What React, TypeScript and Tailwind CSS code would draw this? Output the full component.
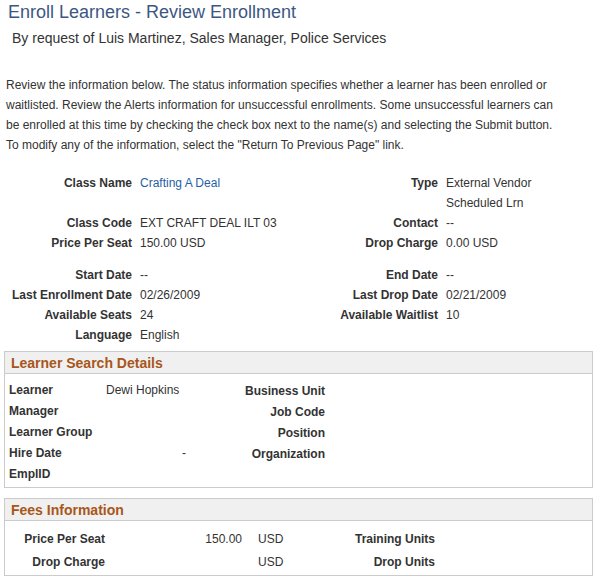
import React from 'react';

const font = { fontFamily: '"Liberation Sans", Arial, sans-serif' };

function Row({ l1, v1, l2, v2, h = 'h-5' }: { l1: string; v1: React.ReactNode; l2?: string; v2?: React.ReactNode; h?: string }) {
  return (
    <>
      <div className={`${h} text-right font-bold whitespace-nowrap`}>{l1}</div>
      <div className={h}>{v1}</div>
      <div className={`${h} text-right font-bold whitespace-nowrap`}>{l2}</div>
      <div className={h}>{v2}</div>
    </>
  );
}

function Box({ title, children }: { title: string; children: React.ReactNode }) {
  return (
    <div className="mx-1 border border-[#cbcbcb]">
      <div className="h-[22px] bg-[#f0f0f0] border-b border-[#cbcbcb] px-[6px] text-[14px] font-bold leading-[22px] text-[#a8561a]">{title}</div>
      {children}
    </div>
  );
}

export default function App() {
  return (
    <div style={font} className="w-[597px] h-[586px] bg-white text-[12px] text-[#333] overflow-hidden">
      <h1 className="pl-[8px] pt-0 text-[18px] leading-[24px] text-[#3b5784]">Enroll Learners - Review Enrollment</h1>
      <div className="pl-[12px] pt-[5px] text-[14px] leading-[18px] text-[#333]">By request of Luis Martinez, Sales Manager, Police Services</div>

      <p className="pl-[6px] w-[560px] pt-[28px] leading-[20px]">
        Review the information below. The status information specifies whether a learner has been enrolled or waitlisted. Review the Alerts information for unsuccessful enrollments. Some unsuccessful learners can be enrolled at this time by checking the check box next to the name(s) and selecting the Submit button. To modify any of the information, select the "Return To Previous Page" link.
      </p>

      <div className="mt-[18px] grid grid-cols-[132px_190px_100px_1fr] gap-x-2 leading-[20px]">
        <Row l1="Class Name" v1={<span className="text-[#1f5fa8]">Crafting A Deal</span>} l2="Type" v2="External Vendor" />
        <Row l1="" v1="" l2="" v2="Scheduled Lrn" />
        <Row l1="Class Code" v1="EXT CRAFT DEAL ILT 03" l2="Contact" v2="--" />
        <Row l1="Price Per Seat" v1="150.00 USD" l2="Drop Charge" v2="0.00 USD" h="h-[22px]" />
        <div className="col-span-4 h-[10px]" />
        <Row l1="Start Date" v1="--" l2="End Date" v2="--" />
        <Row l1="Last Enrollment Date" v1="02/26/2009" l2="Last Drop Date" v2="02/21/2009" />
        <Row l1="Available Seats" v1="24" l2="Available Waitlist" v2="10" />
        <Row l1="Language" v1="English" />
      </div>

      <div className="mt-[6px]">
        <Box title="Learner Search Details">
          <div className="grid grid-cols-[88px_140px_88px_1fr] pl-[4px] pt-[6px] pb-[3px] leading-[20px]">
            <div className="font-bold">Learner</div><div className="pl-[9px]">Dewi Hopkins</div><div className="text-right font-bold whitespace-nowrap pt-[1px]">Business Unit</div><div />
            <div className="font-bold">Manager</div><div /><div className="text-right font-bold pt-[1px]">Job Code</div><div />
            <div className="font-bold">Learner Group</div><div /><div className="text-right font-bold pt-[1px]">Position</div><div />
            <div className="font-bold">Hire Date</div><div className="pl-[85px]">-</div><div className="text-right font-bold pt-[1px]">Organization</div><div />
            <div className="font-bold">EmplID</div><div /><div /><div />
          </div>
        </Box>
        <div className="h-[10px]" />
        <Box title="Fees Information">
          <div className="grid grid-cols-[100px_137px_16px_177px_1fr] pt-[7px] pb-[1px] leading-[23px]">
            <div className="text-right font-bold whitespace-nowrap">Price Per Seat</div><div className="text-right">150.00</div><div /><div className="flex justify-between whitespace-nowrap"><span>USD</span><span className="font-bold">Training Units</span></div><div />
            <div className="text-right font-bold whitespace-nowrap">Drop Charge</div><div /><div /><div className="flex justify-between whitespace-nowrap"><span>USD</span><span className="font-bold">Drop Units</span></div><div />
          </div>
        </Box>
      </div>
    </div>
  );
}
